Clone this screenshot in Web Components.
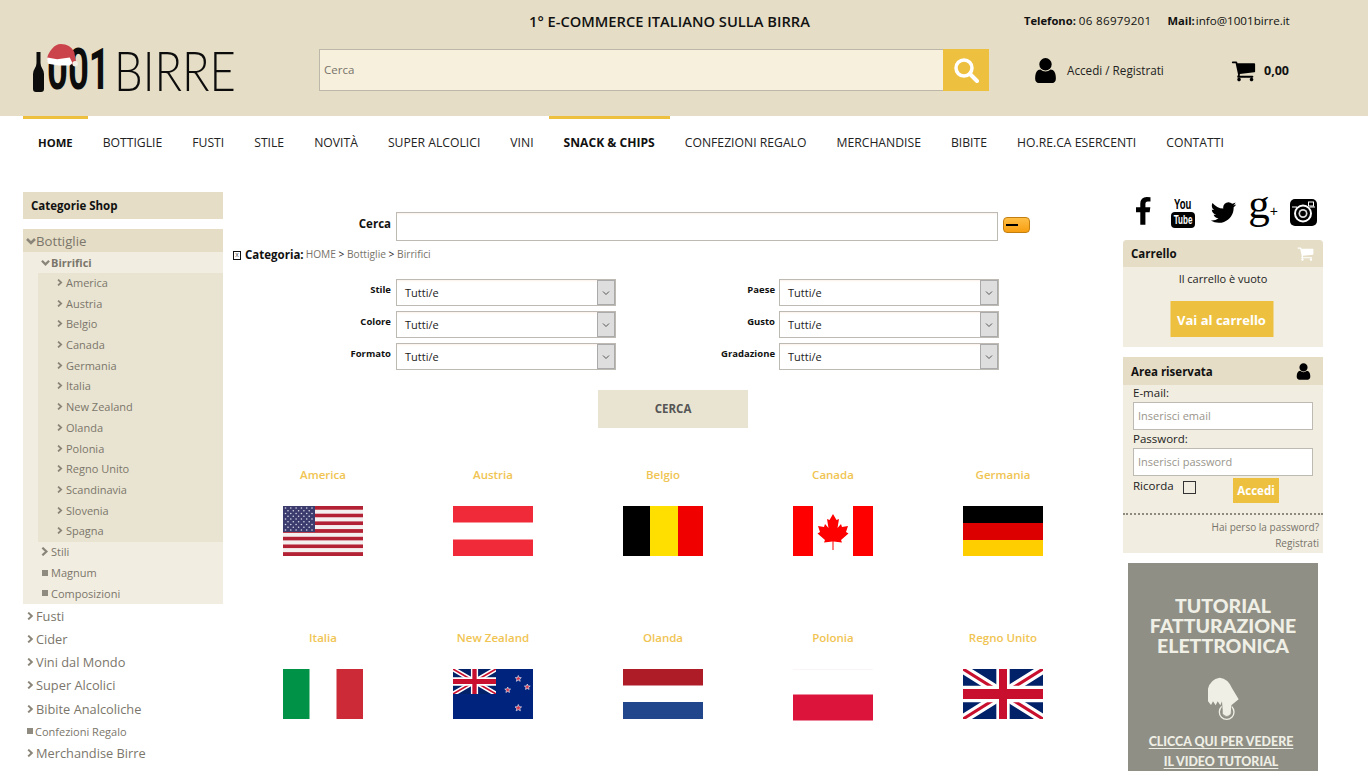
<!DOCTYPE html>
<html lang="it">
<head>
<meta charset="utf-8">
<title>1001 Birre</title>
<style>
    html, body { margin: 0; height: 771px; overflow: hidden; background: #fff; }
    body { font-family: "Open Sans", "Liberation Sans", sans-serif; font-size: 12px; color: #222; }
    .columns { display: flex; gap: 10px; padding: 22px 23px 0; align-items: flex-start; }
    .side { width: 200px; flex: none; display: flex; flex-direction: column; }
</style>
</head>
<body>
<site-header></site-header>
<site-nav></site-nav>
<div class="columns">
    <div class="side"><side-tree></side-tree></div>
    <filter-panel></filter-panel>
    <div class="side">
        <social-links></social-links>
        <cart-box></cart-box>
        <login-box></login-box>
        <promo-banner></promo-banner>
    </div>
</div>

<script>
const ICONS = {
    user: 'M1536 1399q0 109-62.5 187t-150.5 78h-854q-88 0-150.5-78t-62.5-187q0-85 8.5-160.5t31.5-152 58.5-131 94-89 134.5-34.5q131 128 313 128t313-128q76 0 134.5 34.5t94 89 58.5 131 31.5 152 8.5 160.5zm-256-887q0 159-112.5 271.5t-271.5 112.5-271.5-112.5-112.5-271.5 112.5-271.5 271.5-112.5 271.5 112.5 112.5 271.5z',
    cart: 'M704 1536q0 52-38 90t-90 38-90-38-38-90 38-90 90-38 90 38 38 90zm896 0q0 52-38 90t-90 38-90-38-38-90 38-90 90-38 90 38 38 90zm128-1088v512q0 24-16.5 42.5t-40.5 21.5l-1044 122q13 60 13 70 0 16-24 64h920q26 0 45 19t19 45-19 45-45 19h-1024q-26 0-45-19t-19-45q0-11 8-31.5t16-36 21.5-40 15.5-29.5l-177-823h-204q-26 0-45-19t-19-45 19-45 45-19h256q16 0 28.5 6.5t19.5 15.5 13 24.5 8 26 5.5 29.5 4.5 26h1201q26 0 45 19t19 45z',
    twitter: 'M1684 408q-67 98-162 167 1 14 1 42 0 130-38 259.5t-115.5 248.5-184.5 210.5-258 146-323 54.5q-271 0-496-145 35 4 78 4 225 0 401-138-105-2-188-64.5t-114-159.5q33 5 61 5 43 0 85-11-112-23-185.5-111.5t-73.5-205.5v-4q68 38 146 41-66-44-105-115t-39-154q0-88 44-163 121 149 294.5 238.5t371.5 99.5q-8-38-8-74 0-134 94.5-228.5t228.5-94.5q140 0 236 102 109-21 205-78-37 115-142 178 92-10 184-50z',
    facebook: 'M1343 12v264h-157q-86 0-116 36t-30 108v189h293l-39 296h-254v759h-306v-759h-255v-296h255v-218q0-186 104-288.5t277-102.5q147 0 228 12z'
};
const faIcon = (name, size, color) => `<svg width="${size}" height="${size}" viewBox="0 0 1792 1792" fill="${color}"><path d="${ICONS[name]}"/></svg>`;

class SiteHeader extends HTMLElement {
    constructor() {
        super();
        this.attachShadow({ mode: 'open' });
        this.shadowRoot.innerHTML = `
            <style>
                :host { display: block; height: 116px; background: #e5ddc5; color: #111; }
                .top { display: flex; height: 49px; padding-top: 12px; box-sizing: border-box; line-height: 18px; }
                .slogan { margin-left: 529px; font-size: 14.7px; font-weight: 600; width: 281px; white-space: nowrap; }
                .contact { margin-left: 214px; white-space: nowrap; font-size: 11.6px; display: flex; gap: 16px; }
                b { font-weight: 700; font-size: 11.2px; }
                .num { letter-spacing: .3px; }
                .mail b { margin-right: -2px; }
                .row { display: flex; align-items: center; height: 42px; }
                .logo { position: relative; width: 319px; height: 42px; flex: none; }
                .bottle { position: absolute; left: 33px; top: 3px; }
                .digits, .word { position: absolute; top: 0; line-height: 42px; color: #0c0c0c; transform-origin: left center; white-space: nowrap; }
                .digits { left: 47px; font: 700 57px/42px "Roboto", "Liberation Sans", sans-serif; transform: scaleX(.64); }
                .word { left: 114px; font: 300 56px/42px "Lato", "Liberation Sans", sans-serif; transform: scaleX(.81); }
                .hat { position: absolute; left: 46px; top: -5px; }
                .search { width: 670px; height: 42px; flex: none; display: flex; box-sizing: border-box; border: 1px solid #bcb7a8; background: #f7f0dc; }
                .search span { flex: 1; padding-left: 4px; line-height: 40px; font-size: 11.5px; color: #77736a; }
                .search button { width: 46px; margin: -1px; border: 0; padding: 0; background: #edc13f; display: flex; align-items: center; justify-content: center; }
                .account { margin-left: 42px; width: 200px; display: flex; align-items: center; font-size: 11.7px; color: #222; }
                .account svg { margin-right: 7px; }
                .cart { display: flex; align-items: center; font-weight: 700; font-size: 12.5px; }
                .cart svg { margin-right: 8px; }
            </style>
            <div class="top">
                <div class="slogan">1° E-COMMERCE ITALIANO SULLA BIRRA</div>
                <div class="contact">
                    <span><b>Telefono:</b> <span class="num">06 86979201</span></span>
                    <span class="mail"><b>Mail:</b> info@1001birre.it</span>
                </div>
            </div>
            <div class="row">
                <div class="logo">
                    <svg class="bottle" width="11" height="40" viewBox="0 0 11 40"><path fill="#0c0c0c" d="M3.5 0h4v11q0 3 2 6 1.500 2 1.500 5v15q0 3-3 3H3q-3 0-3-3V22q0-3 1.500-5 2-3 2-6z"/></svg>
                    <span class="digits">001</span>
                    <span class="word">BIRRE</span>
                    <svg class="hat" width="34" height="27" viewBox="0 0 37 30">
                        <path fill="#cc444b" d="M1 15C3 8 9 0 16 0c7 0 12 3 15 9l2 11-5 3-3-6-14 3-10-1z"/>
                        <path fill="#fff" d="M1 15l11 2 14-2 3 6-3 3-12 0-12-2q-2-4-1-7z"/>
                        <circle cx="32" cy="22" r="3" fill="#f3efe6"/>
                    </svg>
                </div>
                <div class="search">
                    <span>Cerca</span>
                    <button aria-label="Cerca"><svg width="26" height="26" viewBox="0 0 26 26" fill="none" stroke="#fff" stroke-linecap="round"><circle cx="11" cy="11" r="8" stroke-width="3.500"/><path d="M17 17l7 7" stroke-width="4"/></svg></button>
                </div>
                <div class="account">${faIcon('user', 29, '#000')}<span>Accedi / Registrati</span></div>
                <div class="cart">${faIcon('cart', 25, '#000')}<span>0,00</span></div>
            </div>
        `;
    }
}
customElements.define('site-header', SiteHeader);

class SiteNav extends HTMLElement {
    constructor() {
        super();
        this.attachShadow({ mode: 'open' });
        const items = ['HOME', 'BOTTIGLIE', 'FUSTI', 'STILE', 'NOVITÀ', 'SUPER ALCOLICI', 'VINI', 'SNACK & CHIPS', 'CONFEZIONI REGALO', 'MERCHANDISE', 'BIBITE', 'HO.RE.CA ESERCENTI', 'CONTATTI'];
        const active = ['HOME', 'SNACK & CHIPS'];
        this.shadowRoot.innerHTML = `
            <style>
                :host { display: block; height: 54px; padding-left: 23px; }
                nav { display: flex; }
                a { display: block; padding: 0 15px; border-top: 3px solid transparent; line-height: 48px; height: 51px; font-size: 12.2px; color: #222; white-space: nowrap; }
                a.on { border-top-color: #edc13f; font-weight: 700; color: #111; font-size: 12.1px; }
                a.on:first-child { font-size: 11.3px; }
            </style>
            <nav>${items.map(t => `<a class="${active.includes(t) ? 'on' : ''}">${t.replace('&', '&amp;')}</a>`).join('')}</nav>
        `;
    }
}
customElements.define('site-nav', SiteNav);

const chevron = (dir, size) => {
    const d = dir === 'down' ? 'M1 3l4 4 4-4' : 'M1.500 .8l4.500 4.200-4.500 4.200';
    return `<svg class="ic" width="${size}" height="${size}" viewBox="0 0 10 10" fill="none" stroke="#8a8578" stroke-width="2.500"><path d="${d}"/></svg>`;
};

class SideTree extends HTMLElement {
    constructor() {
        super();
        this.attachShadow({ mode: 'open' });
        const countries = ['America', 'Austria', 'Belgio', 'Canada', 'Germania', 'Italia', 'New Zealand', 'Olanda', 'Polonia', 'Regno Unito', 'Scandinavia', 'Slovenia', 'Spagna'];
        const square = '<i class="sq"></i>';
        const row = (cls, icon, text) => `<div class="row ${cls}">${icon}<span>${text}</span></div>`;
        this.shadowRoot.innerHTML = `
            <style>
                :host { display: block; color: #7b766b; }
                .title { height: 27px; line-height: 27px; padding-left: 8px; background: #e5ddc5; color: #111; font-weight: 700; font-size: 11.5px; margin-bottom: 10px; }
                .row { display: flex; align-items: center; white-space: nowrap; box-sizing: border-box; }
                .ic { flex: none; margin-right: 1px; }
                .sq { width: 6px; height: 6px; background: #8f8b80; margin: 0 3px 0 1px; flex: none; }
                .l0 { height: 23px; padding-left: 4px; font-size: 12.8px; }
                .l0 .ic { margin-right: 1px; }
                .l0.open { background: #e5ddc5; padding-left: 3px; font-size: 13.2px; }
                .l0.open .ic { margin-right: 0; }
                .l0.small { font-size: 11px; height: 21px; }
                .l0.small .sq { margin: 0 2px 0 0; }
                .l0.gap { margin-top: 1px; }
                .l1 { height: 20.7px; padding-left: 18px; font-size: 11px; }
                .l1.sel { font-weight: 700; }
                .l1 .sq { margin-left: 1px; }
                .l2 { height: 20.7px; padding: 0 0 1px 19px; font-size: 11px; }
                .l2 .ic { margin-right: 2px; }
                .sub { background: #f1ede0; }
                .subsub { margin-left: 15px; background: #e9e4d1; }
            </style>
            <div class="title">Categorie Shop</div>
            ${row('l0 open', chevron('down', 10), 'Bottiglie')}
            <div class="sub">
                ${row('l1 sel', chevron('down', 9), 'Birrifici')}
                <div class="subsub">${countries.map(c => row('l2', chevron('right', 7), c)).join('')}</div>
                ${row('l1', chevron('right', 9), 'Stili')}
                ${row('l1', square, 'Magnum')}
                ${row('l1', square, 'Composizioni')}
            </div>
            ${row('l0 gap', chevron('right', 8), 'Fusti')}
            ${row('l0', chevron('right', 8), 'Cider')}
            ${row('l0', chevron('right', 8), 'Vini dal Mondo')}
            ${row('l0', chevron('right', 8), 'Super Alcolici')}
            ${row('l0 gap', chevron('right', 8), 'Bibite Analcoliche')}
            ${row('l0 small', square, 'Confezioni Regalo')}
            ${row('l0', chevron('right', 8), 'Merchandise Birre')}
        `;
    }
}
customElements.define('side-tree', SideTree);

class FilterSelect extends HTMLElement {
    constructor() {
        super();
        this.attachShadow({ mode: 'open' });
        this.shadowRoot.innerHTML = `
            <style>
                :host { display: flex; width: 220px; height: 27px; box-sizing: border-box; border: 1px solid #bdb9b3; background: #fff; box-shadow: inset 0 2px 2px -1px #fdf1ea; }
                .val { flex: 1; padding: 4px 0 0 8px; font-size: 11px; line-height: 17px; color: #222; }
                .btn { width: 16px; background: #dedede; border: 1px solid #aaa; display: flex; align-items: center; justify-content: center; }
            </style>
            <div class="val"><slot></slot></div>
            <div class="btn"><svg width="8" height="6" viewBox="0 0 8 6" fill="none" stroke="#555"><path d="M1 1.500l3 3 3-3"/></svg></div>
        `;
    }
}
customElements.define('filter-select', FilterSelect);

function unionJack(w, h) {
    return `<svg x="0" y="0" width="${w}" height="${h}" viewBox="0 0 60 30" preserveAspectRatio="none">
        <rect width="60" height="30" fill="#012169"/>
        <path d="M0 0L60 30M60 0L0 30" stroke="#fff" stroke-width="6"/>
        <path d="M0 0L60 30M60 0L0 30" stroke="#c8102e" stroke-width="2"/>
        <path d="M30 0V30M0 15H60" stroke="#fff" stroke-width="10"/>
        <path d="M30 0V30M0 15H60" stroke="#c8102e" stroke-width="6"/>
    </svg>`;
}

function star(x, y, r) {
    let pts = [];
    for (let i = 0; i < 10; i++) {
        const a = -Math.PI / 2 + i * Math.PI / 5;
        const rad = i % 2 ? r * 0.45 : r;
        pts.push((x + rad * Math.cos(a)).toFixed(1) + ',' + (y + rad * Math.sin(a)).toFixed(1));
    }
    return `<polygon points="${pts.join(' ')}" fill="#d8344a" stroke="#dfe3f0" stroke-width=".7"/>`;
}

const stripes = (list) => list.map(([y, h, c]) => `<rect y="${y}" width="80" height="${h}" fill="${c}"/>`).join('');
const bars = (list) => list.map(([x, w, c]) => `<rect x="${x}" width="${w}" height="50" fill="${c}"/>`).join('');

function usFlag() {
    let out = '';
    for (let i = 0; i < 13; i++) {
        out += `<rect y="${(i * 50 / 13).toFixed(2)}" width="80" height="${(50 / 13).toFixed(2)}" fill="${i % 2 ? '#f5f0f0' : '#b22234'}"/>`;
    }
    out += '<rect width="32" height="26" fill="#3c3b6e"/>';
    for (let r = 0; r < 9; r++) {
        const n = r % 2 ? 5 : 6;
        for (let c = 0; c < n; c++) {
            out += `<circle cx="${(r % 2 ? 5 : 2.500) + c * 5.300}" cy="${2 + r * 2.750}" r=".8" fill="#d9d9e8"/>`;
        }
    }
    return out;
}

const FLAGS = {
    America: usFlag(),
    Austria: stripes([[0, 16.500, '#f12a39'], [33.500, 16.500, '#f12a39']]),
    Belgio: bars([[0, 27, '#000'], [27, 28, '#ffdf00'], [55, 25, '#f10000']]),
    Canada: bars([[0, 20, '#f00'], [60, 20, '#f00']]) + '<polygon fill="#f00" points="40,8 36.500,14 34,13 35.500,22 32,18 31,21 25,20 27,26 24.500,27.500 32,34 31,36.500 39.500,35.500 39.500,44 40.500,44 40.500,35.500 49,36.500 48,34 55.500,27.500 53,26 55,20 49,21 48,18 44.500,22 46,13 43.500,14"/>',
    Germania: stripes([[0, 17, '#000'], [17, 17, '#dd0000'], [34, 16, '#ffce00']]),
    Italia: bars([[0, 26.500, '#009246'], [53.500, 26.500, '#cd2a38']]),
    'New Zealand': '<rect width="80" height="50" fill="#00247d"/>' + unionJack(43, 25) + star(65.300, 9.700, 3.200) + star(74.300, 18, 3) + star(54.700, 21, 3) + star(65.300, 39, 3.500),
    Olanda: stripes([[0, 16.500, '#ae1c28'], [33, 17, '#21468b']]),
    Polonia: '<rect width="80" height=".6" fill="#fbeef3"/><rect y="25.500" width="80" height="26" fill="#dc143c"/>',
    'Regno Unito': unionJack(80, 50)
};

class FlagCard extends HTMLElement {
    connectedCallback() {
        const name = this.getAttribute('name');
        this.attachShadow({ mode: 'open' });
        this.shadowRoot.innerHTML = `
            <style>
                :host { display: block; height: 163px; text-align: center; }
                .name { height: 18px; line-height: 18px; font-size: 11.5px; font-weight: 600; color: #f0c452; margin-bottom: 22px; }
                svg { display: block; margin: 0 auto; }
            </style>
            <div class="name">${name}</div>
            <svg width="80" height="${name === 'Polonia' ? 52 : 50}" viewBox="0 0 80 ${name === 'Polonia' ? 52 : 50}">${FLAGS[name]}</svg>
        `;
    }
}
customElements.define('flag-card', FlagCard);

class FilterPanel extends HTMLElement {
    constructor() {
        super();
        this.attachShadow({ mode: 'open' });
        const filters = ['Stile', 'Paese', 'Colore', 'Gusto', 'Formato', 'Gradazione'];
        const flags = ['America', 'Austria', 'Belgio', 'Canada', 'Germania', 'Italia', 'New Zealand', 'Olanda', 'Polonia', 'Regno Unito'];
        this.shadowRoot.innerHTML = `
            <style>
                :host { display: block; width: 880px; flex: none; padding-top: 20px; box-sizing: border-box; color: #111; }
                .search { display: flex; align-items: flex-start; gap: 5px; }
                .search label { width: 158px; text-align: right; font-weight: 700; font-size: 11.5px; line-height: 24px; }
                .search .input { width: 602px; height: 29px; box-sizing: border-box; border: 1px solid #bdb9b3; box-shadow: inset 0 2px 2px -1px #fdf1ea; }
                .toggle { width: 27px; height: 16px; margin-top: 5px; box-sizing: border-box; border: 1px solid #c27f10; border-radius: 4px; background: linear-gradient(#ffbe45, #f79f12); display: flex; align-items: center; padding-left: 2px; }
                .toggle i { width: 12px; height: 2px; background: #000; }
                .crumb { display: flex; align-items: center; margin-top: 5px; height: 16px; font-size: 10.2px; color: #77736a; white-space: pre; }
                .crumb .broken { width: 8px; height: 9px; box-sizing: border-box; border: 1px solid #111; margin: 3px 4px 0 0; font: 7px/6px "Liberation Sans", sans-serif; text-align: center; color: #555; overflow: hidden; }
                .crumb b { font-size: 11.5px; color: #111; margin-right: 2px; }
                .crumb em { font-style: normal; color: #222; }
                .filters { display: grid; grid-template-columns: 158px 220px 153px 220px; gap: 5px; margin-top: 17px; }
                .filters label { text-align: right; font-weight: 700; font-size: 9.5px; line-height: 14px; padding-top: 4px; }
                .filters label:nth-child(4n+3) { margin-right: -1px; }
                .go { width: 150px; height: 38px; margin: 20px 0 0 365px; background: #e9e4d1; color: #555; font-weight: 700; font-size: 11.5px; line-height: 38px; text-align: center; }
                .flags { display: grid; grid-template-columns: repeat(5, 170px); margin: 38px 0 0 5px; }
            </style>
            <div class="search">
                <label>Cerca</label>
                <div class="input"></div>
                <div class="toggle"><i></i></div>
            </div>
            <div class="crumb"><span class="broken">x</span><b>Categoria:</b><span>HOME <em>&gt;</em> Bottiglie <em>&gt;</em> Birrifici</span></div>
            <div class="filters">
                ${filters.map(f => `<label>${f}</label><filter-select>Tutti/e</filter-select>`).join('')}
            </div>
            <div class="go">CERCA</div>
            <div class="flags">${flags.map(f => `<flag-card name="${f}"></flag-card>`).join('')}</div>
        `;
    }
}
customElements.define('filter-panel', FilterPanel);

class SocialLinks extends HTMLElement {
    constructor() {
        super();
        this.attachShadow({ mode: 'open' });
        this.shadowRoot.innerHTML = `
            <style>
                :host { display: flex; height: 48px; padding-top: 4px; box-sizing: border-box; color: #000; }
                .cell { width: 40px; height: 32px; flex: none; display: flex; flex-direction: column; justify-content: center; align-items: center; font-family: "Liberation Sans", sans-serif; font-weight: 700; }
                svg { display: block; }
                .you { font-size: 14px; line-height: 15px; transform: scaleX(.68); }
                .tube { width: 24px; height: 16px; border-radius: 4px; background: #000; color: #fff; font-size: 13px; line-height: 16px; text-align: center; display: flex; justify-content: center; }
                .tube span { flex: none; transform: scaleX(.62); }
                .gplus { flex-direction: row; align-items: flex-start; font: 400 43px/32px "Liberation Serif", serif; }
                .gplus span { height: 32px; margin-top: -8px; }
                .gplus small { font: 400 14px/16px "Liberation Sans", sans-serif; margin: 7px 0 0 0; }
            </style>
            <div class="cell">${faIcon('facebook', 30, '#000')}</div>
            <div class="cell"><span class="you">You</span><div class="tube"><span>Tube</span></div></div>
            <div class="cell">${faIcon('twitter', 29, '#000')}</div>
            <div class="cell gplus"><span>g</span><small>+</small></div>
            <div class="cell">
                <svg width="27" height="27" viewBox="0 0 27 27">
                    <rect width="27" height="27" rx="5"/>
                    <path d="M2 8h5M20 8h5" stroke="#fff" stroke-width="1.200"/>
                    <rect x="18.500" y="3" width="5" height="4" fill="none" stroke="#fff"/>
                    <circle cx="13" cy="14.500" r="9" fill="#fff"/>
                    <circle cx="13" cy="14.500" r="7"/>
                    <circle cx="13" cy="14.500" r="4.500" fill="#ddd"/>
                    <circle cx="13" cy="14.500" r="2.800"/>
                </svg>
            </div>
        `;
    }
}
customElements.define('social-links', SocialLinks);

class CartBox extends HTMLElement {
    constructor() {
        super();
        this.attachShadow({ mode: 'open' });
        this.shadowRoot.innerHTML = `
            <style>
                :host { display: block; height: 107px; background: #f1ede0; margin-bottom: 10px; border-radius: 4px 4px 0 0; text-align: center; }
                .head { display: flex; justify-content: space-between; align-items: center; height: 27px; padding: 0 9px 0 8px; background: #e5ddc5; border-radius: 4px 4px 0 0; font-weight: 700; font-size: 11.5px; color: #111; }
                p { margin: 3px 0 0; height: 18px; line-height: 18px; font-size: 11px; color: #222; }
                .btn { width: 103px; height: 36px; margin: 13px auto 0; background: #edc13f; color: #fff; font-weight: 700; font-size: 13px; line-height: 38px; transform: translateX(-1.500px); }
            </style>
            <div class="head"><span>Carrello</span>${faIcon('cart', 17, '#fff')}</div>
            <p>Il carrello è vuoto</p>
            <div class="btn">Vai al carrello</div>
        `;
    }
}
customElements.define('cart-box', CartBox);

class LoginBox extends HTMLElement {
    constructor() {
        super();
        this.attachShadow({ mode: 'open' });
        this.shadowRoot.innerHTML = `
            <style>
                :host { display: block; height: 196px; background: #f1ede0; margin-bottom: 10px; font-size: 11.5px; color: #222; }
                .head { display: flex; justify-content: space-between; align-items: center; height: 28px; padding: 0 10px 0 8px; background: #e5ddc5; font-weight: 700; color: #111; }
                .form { padding: 0 10px; }
                label { display: block; height: 17px; line-height: 15px; }
                .field { height: 28px; box-sizing: border-box; border: 1px solid #bdb9b3; background: #fff; padding-left: 4px; line-height: 26px; font-size: 11px; color: #99958c; margin-bottom: 1px; }
                .remember { display: flex; align-items: flex-start; height: 36px; box-sizing: border-box; }
                .remember span { width: 50px; line-height: 18px; }
                .remember i { width: 13px; height: 13px; box-sizing: border-box; border: 1px solid #333; background: #f1ede0; margin-top: 4px; }
                .remember button { width: 46px; height: 25px; border: 0; margin: 1px 0 0 37px; padding: 0; background: #edc13f; color: #fff; font: 700 11.5px "Open Sans", sans-serif; }
                .links { border-top: 2px dotted #8e8a80; padding: 4px 4px 0 0; text-align: right; font-size: 10px; line-height: 16px; color: #77736a; }
            </style>
            <div class="head"><span>Area riservata</span>${faIcon('user', 19, '#000')}</div>
            <div class="form">
                <label>E-mail:</label>
                <div class="field">Inserisci email</div>
                <label>Password:</label>
                <div class="field">Inserisci password</div>
                <div class="remember"><span>Ricorda</span><i></i><button>Accedi</button></div>
            </div>
            <div class="links">Hai perso la password?<br>Registrati</div>
        `;
    }
}
customElements.define('login-box', LoginBox);

class PromoBanner extends HTMLElement {
    constructor() {
        super();
        this.attachShadow({ mode: 'open' });
        this.shadowRoot.innerHTML = `
            <style>
                :host { display: block; width: 190px; height: 240px; margin-left: 5px; background: #8f8f85; color: #efefe6; text-align: center; font-family: "Lato", "Liberation Sans", sans-serif; font-weight: 900; padding-top: 33px; box-sizing: border-box; }
                h2 { margin: 0; font-size: 19.5px; line-height: 20px; font-weight: 900; }
                svg { display: block; margin: 20px auto 10px; }
                a { display: block; font-size: 14px; line-height: 20px; text-decoration: underline; text-underline-offset: 2px; transform: translateX(-2px) scaleX(.885); }
            </style>
            <h2>TUTORIAL<br>FATTURAZIONE<br>ELETTRONICA</h2>
            <svg width="34" height="45" viewBox="270 360 100 135">
                <circle cx="331" cy="468" r="22" fill="none" stroke="#efefe6" stroke-width="4"/>
                <circle cx="331" cy="468" r="12" fill="none" stroke="#efefe6" stroke-width="4"/>
                <path fill="#efefe6" stroke="#8f8f85" stroke-width="4" d="M317 436L320 474Q331 486 343 474L345 436Z"/>
                <path fill="#efefe6" d="M275 398Q282 370 310 365Q335 367 348 398L367 430L345 448L343 474Q331 486 320 474L317 436L312 448L304 436L298 448L290 436L284 447L275 436Z"/>
            </svg>
            <a>CLICCA QUI PER VEDERE</a>
            <a>IL VIDEO TUTORIAL</a>
        `;
    }
}
customElements.define('promo-banner', PromoBanner);
</script>
</body>
</html>
